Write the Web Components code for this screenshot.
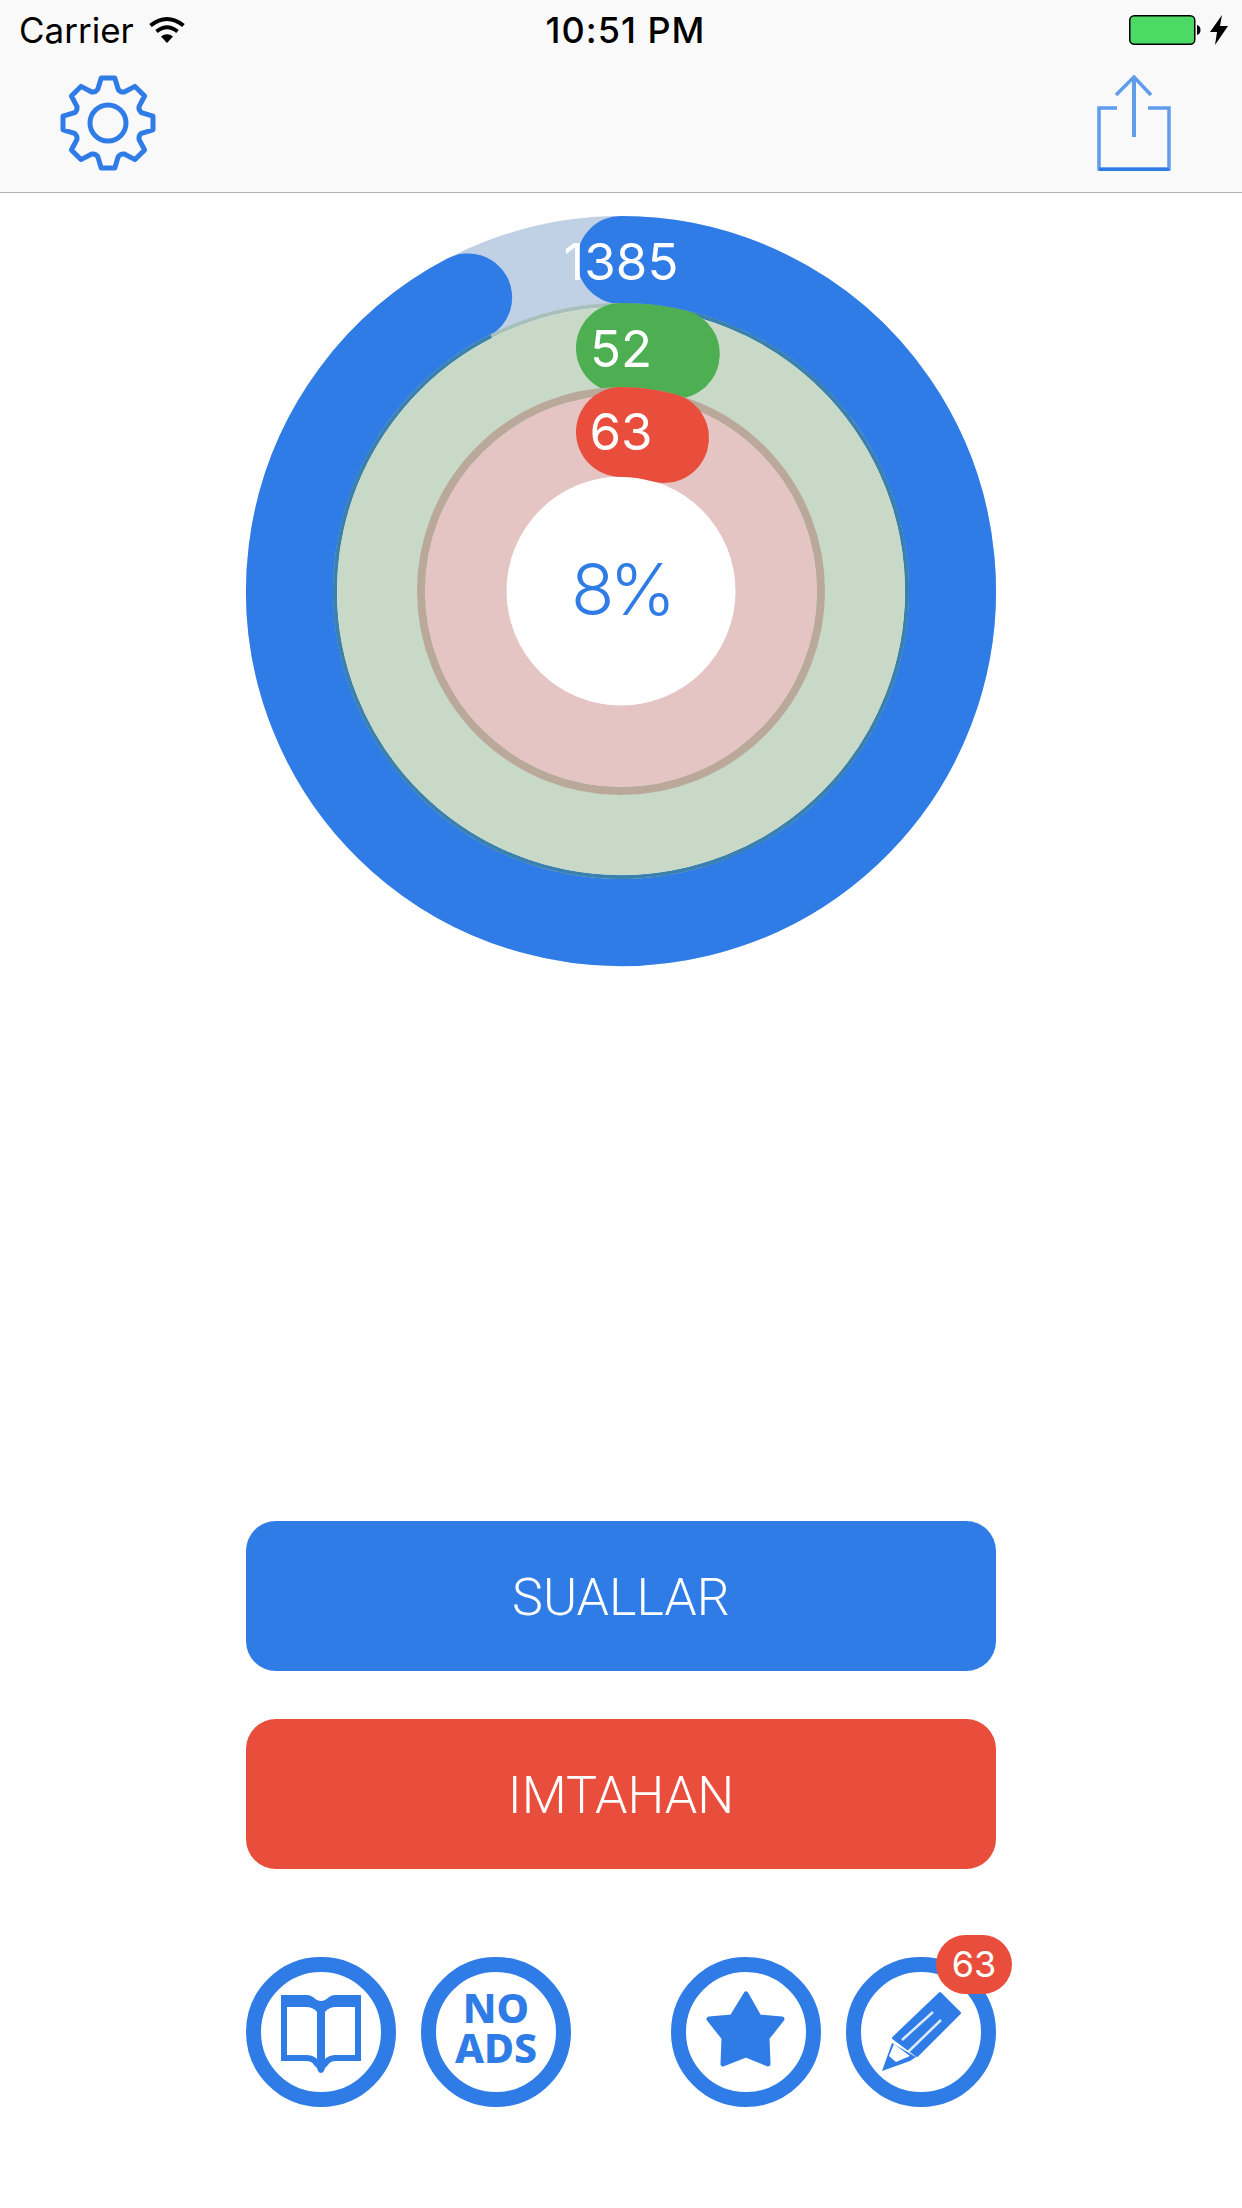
<!DOCTYPE html>
<html>
<head>
<meta charset="utf-8">
<style>
html, body { margin: 0; padding: 0; background: #fff; }
body { width: 1242px; height: 2208px; overflow: hidden; font-family: Inter, Roboto, "Liberation Sans", sans-serif; }
</style>
</head>
<body>
<app-screen>
  <nav-bar></nav-bar>
  <progress-rings total="1385" correct="52" wrong="63" percent="8%"></progress-rings>
  <action-button color="#2f7ce6" style="margin-top:555px">SUALLAR</action-button>
  <action-button color="#e94e3d" style="margin-top:48px">IMTAHAN</action-button>
  <icon-row>
    <round-icon slot="left" icon="book"></round-icon>
    <round-icon slot="left" icon="noads" label="NO ADS"></round-icon>
    <round-icon slot="right" icon="star"></round-icon>
    <round-icon slot="right" icon="pencil" badge="63"></round-icon>
  </icon-row>
</app-screen>

<script>
const BLUE = "#2f7ce6"

class AppScreen extends HTMLElement {
  constructor() {
    super()
    this.attachShadow({ mode: "open" }).innerHTML = `
      <style>
        :host { display: flex; flex-direction: column; align-items: center; width: 1242px; }
      </style>
      <slot></slot>`
  }
}

class NavBar extends HTMLElement {
  constructor() {
    super()
    // gear outline with 8 teeth
    let pts = []
    for (let i = 0; i < 8; i++) {
      let a = i * Math.PI / 4 - Math.PI / 2
      let p = (r, d) => {
        let x = 48 + r * Math.cos(a + d), y = 48 + r * Math.sin(a + d)
        return x.toFixed(1) + " " + y.toFixed(1)
      }
      pts.push((i ? "L" : "M") + p(35, -0.3) + "L" + p(45.5, -0.15) + "L" + p(45.5, 0.15) + "L" + p(35, 0.3))
      let b = a + Math.PI / 8
      pts.push("Q" + (48 + 33 * Math.cos(b)).toFixed(1) + " " + (48 + 33 * Math.sin(b)).toFixed(1) + " " + p(35, 0.48))
    }
    this.attachShadow({ mode: "open" }).innerHTML = `
      <style>
        :host { display: block; width: 1242px; height: 192px; background: #f9f9f9; border-bottom: 1px solid #b2b2b2; color: #000; }
        .status { display: grid; grid-template-columns: 1fr auto 1fr; align-items: center; height: 60px; padding: 0 14px 0 19px; }
        .left { display: flex; align-items: center; gap: 14px; font-size: 35px; }
        .time { font-size: 36px; font-weight: 500; letter-spacing: 1px; padding-left: 4px; }
        .right { display: flex; justify-content: flex-end; align-items: center; gap: 9px; }
        .tools { display: flex; justify-content: space-between; padding: 15px 70px 0 60px; }
        svg { display: block; }
        .tools svg { filter: blur(.5px); }
      </style>
      <div class="status">
        <div class="left">
          <span>Carrier</span>
          <svg width="38" height="28" viewBox="0 0 38 28">
            <path d="M19 27L13 20.5Q19 16 25 20.5Z" fill="#000"/>
            <path d="M8.5 15.5Q19 7 29.5 15.5" fill="none" stroke="#000" stroke-width="4"/>
            <path d="M2.5 9.5Q19 -3.5 35.5 9.5" fill="none" stroke="#000" stroke-width="4"/>
          </svg>
        </div>
        <div class="time">10:51 PM</div>
        <div class="right">
          <svg width="72" height="30" viewBox="0 0 72 30">
            <rect x="0.75" y="0.75" width="65" height="28.5" rx="4.5" fill="#4cd964" stroke="#000" stroke-width="1.5"/>
            <path d="M68 10Q71.5 11 71.5 15T68 20Z" fill="#000"/>
          </svg>
          <svg width="18" height="30" viewBox="0 0 18 30">
            <path d="M12 0L0 17H7L5 30L18 11H10Z" fill="#000"/>
          </svg>
        </div>
      </div>
      <div class="tools">
        <svg width="96" height="96" viewBox="0 0 96 96" fill="none" stroke="${BLUE}" stroke-width="5" stroke-linejoin="round">
          <path d="${pts.join("")}Z"/>
          <circle cx="48" cy="48" r="18"/>
        </svg>
        <svg width="76" height="96" viewBox="0 0 76 96" fill="none" stroke="#5f9cec" stroke-width="3.5">
          <path d="M21 33H3V94H73V33H52"/>
          <path d="M3 94.5H73" stroke="${BLUE}" stroke-width="3.5"/>
          <path d="M38 62V4" stroke-width="4"/>
          <path d="M20 20L38 2L55 20"/>
        </svg>
      </div>`
  }
}

class ProgressRings extends HTMLElement {
  constructor() {
    super()
    const arc = (r, deg) => {
      let a = deg * Math.PI / 180
      let x = 375 + r * Math.sin(a), y = 375 - r * Math.cos(a)
      return `M375 ${375 - r}A${r} ${r} 0 ${deg > 180 ? 1 : 0} 1 ${x.toFixed(2)} ${y.toFixed(2)}`
    }
    this.attachShadow({ mode: "open" }).innerHTML = `
      <style>
        :host { display: block; position: relative; width: 750px; height: 750px; margin-top: 23px; }
        svg { display: block; overflow: visible; }
        .num { position: absolute; left: 0; right: 0; text-align: center; color: #fff; font-size: 51px; line-height: 60px; }
        .pct { position: absolute; left: 0; right: 0; top: 333px; text-align: center; color: ${BLUE}; font-size: 71px; line-height: 80px; font-weight: 300; letter-spacing: -5px; }
      </style>
      <svg width="750" height="750" viewBox="0 0 750 750" fill="none" stroke-linecap="round">
        <circle cx="375" cy="375" r="331" stroke="#c0d1e6" stroke-width="88"/>
        <path d="${arc(331, 332.5)}" stroke="${BLUE}" stroke-width="88"/>
        <circle cx="375" cy="375" r="286" stroke="#a8c0bc" stroke-width="4"/>
        <path d="${arc(286, 333)}" stroke="#3a81b0" stroke-width="4" stroke-linecap="butt"/>
        <circle cx="375" cy="375" r="240" stroke="#c8d9c8" stroke-width="88"/>
        <path d="${arc(243, 12.8)}" stroke="#4eae52" stroke-width="90"/>
        <circle cx="375" cy="375" r="155" stroke="#e5c5c3" stroke-width="82"/>
        <circle cx="375" cy="375" r="200" stroke="#baa99b" stroke-width="8"/>
        <circle cx="375" cy="375" r="114.5" fill="#fff"/>
        <path d="${arc(159, 15.7)}" stroke="#e94e3d" stroke-width="90"/>
      </svg>
      <div class="num" style="top:16px">${this.getAttribute("total")}</div>
      <div class="num" style="top:103px">${this.getAttribute("correct")}</div>
      <div class="num" style="top:186px">${this.getAttribute("wrong")}</div>
      <div class="pct">${this.getAttribute("percent")}</div>`
  }
}

class ActionButton extends HTMLElement {
  constructor() {
    super()
    this.attachShadow({ mode: "open" }).innerHTML = `
      <style>
        :host { display: flex; align-items: center; justify-content: center; box-sizing: border-box; width: 750px; height: 150px; padding-top: 3px; border-radius: 30px; color: #fff; font-family: Roboto, sans-serif; font-size: 52px; font-weight: 300; background: var(--bg); }
      </style>
      <slot></slot>`
    this.style.setProperty("--bg", this.getAttribute("color"))
  }
}

class IconRow extends HTMLElement {
  constructor() {
    super()
    this.attachShadow({ mode: "open" }).innerHTML = `
      <style>
        :host { display: flex; justify-content: space-between; width: 750px; margin-top: 88px; }
        .group { display: flex; gap: 25px; }
      </style>
      <div class="group"><slot name="left"></slot></div>
      <div class="group"><slot name="right"></slot></div>`
  }
}

const ICONS = {
  book: `<path fill-rule="evenodd" d="M35 38H61Q64 38 67 40Q71 44 75 44Q79 44 83 40Q86 38 89 38H115V104H90Q84 104 82 108Q79 110 78 114Q75 118 72 114Q71 110 68 108Q66 104 60 104H35ZM41 50V98H60Q67 98 71 102V55Q67 50 60 50ZM109 50H90Q83 50 79 55V102Q83 98 90 98H109Z"/>`,
  noads: "",
  star: `<path stroke="${BLUE}" stroke-width="5" stroke-linejoin="round" d="M75 37L88 60L111 62L96 81L97 107L75 98L52 107L53 81L38 62L61 60Z"/>`,
  pencil: `<path stroke="${BLUE}" stroke-width="3" stroke-linejoin="round" d="M94 36.5L113.5 56L71 98.5L47.5 81Z"/>
           <path d="M46 86L36 114L64 104L70 100Z"/>
           <path fill="#fff" d="M47 88L63 100L49 106L42 100Z" transform="translate(1 -1)"/>
           <path d="M87 55L56 83M95 63L62 95" stroke="#dce9fb" stroke-width="2.5"/>`
}

class RoundIcon extends HTMLElement {
  constructor() {
    super()
    let badge = this.getAttribute("badge")
    let label = this.getAttribute("label")
    this.attachShadow({ mode: "open" }).innerHTML = `
      <style>
        :host { display: block; position: relative; width: 150px; height: 150px; }
        svg { display: block; overflow: visible; }
        .label { position: absolute; left: 25px; top: 30px; width: 100px; color: ${BLUE}; font-family: "Noto Sans", sans-serif; font-weight: 800; font-size: 41px; line-height: 40px; text-align: center; }
        .badge { position: absolute; left: 90px; top: -22px; width: 76px; height: 59px; border-radius: 29.5px; background: #e94e3d; color: #fff; font-size: 36px; line-height: 59px; text-align: center; }
      </style>
      <svg width="150" height="150" viewBox="0 0 150 150" fill="${BLUE}">
        <circle cx="75" cy="75" r="67.5" fill="#fff" stroke="${BLUE}" stroke-width="15"/>
        ${ICONS[this.getAttribute("icon")]}
      </svg>
      ${label ? `<div class="label">${label}</div>` : ""}
      ${badge ? `<div class="badge">${badge}</div>` : ""}`
  }
}

customElements.define("app-screen", AppScreen)
customElements.define("nav-bar", NavBar)
customElements.define("progress-rings", ProgressRings)
customElements.define("action-button", ActionButton)
customElements.define("icon-row", IconRow)
customElements.define("round-icon", RoundIcon)
</script>
</body>
</html>
